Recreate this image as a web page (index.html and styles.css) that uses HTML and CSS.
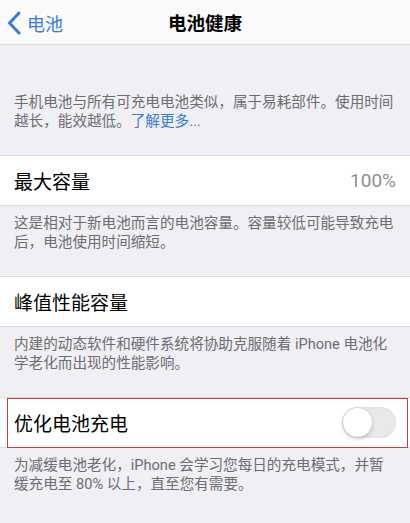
FILE: index.html
```html
<!DOCTYPE html>
<html lang="zh-CN">
  <head>
    <meta charset="UTF-8" />
    <meta name="viewport" content="width=device-width, initial-scale=1.0" />
    <title>电池健康</title>
    <link rel="stylesheet" href="styles.css">
  </head>
  <body>
    <header class="navbar">
      <a class="back" href="#">
        <svg class="chevron" width="14" height="24" viewBox="0 0 14 24">
          <polyline points="12,2 2.5,12 12,22" fill="none" stroke="#3a7bd5" stroke-width="3" stroke-linecap="round" stroke-linejoin="round" />
        </svg>
        <span>电池</span>
      </a>
      <h1 class="title">电池健康</h1>
    </header>

    <main class="settings">
      <p class="intro">
        手机电池与所有可充电电池类似，属于易耗部件。使用时间越长，能效越低。<a class="link" href="#">了解更多...</a>
      </p>

      <div class="row">
        <span class="label">最大容量</span>
        <span class="value">100%</span>
      </div>
      <p class="footnote">这是相对于新电池而言的电池容量。容量较低可能导致充电后，电池使用时间缩短。</p>

      <div class="row">
        <span class="label">峰值性能容量</span>
      </div>
      <p class="footnote">内建的动态软件和硬件系统将协助克服随着 iPhone 电池化学老化而出现的性能影响。</p>

      <div class="row highlighted">
        <span class="label">优化电池充电</span>
        <span class="toggle"><span class="knob"></span></span>
        <span class="mark"></span>
      </div>
      <p class="footnote">为减缓电池老化，iPhone 会学习您每日的充电模式，并暂缓充电至 80% 以上，直至您有需要。</p>
    </main>
  </body>
</html>
```

FILE: styles.css
```css
html {
  font-family: "Roboto", "Noto Sans CJK SC", sans-serif;
}

body {
  margin: 0;
  padding: 0;
  width: 410px;
  height: 523px;
  overflow: hidden;
  background: #efeff4;
}

.navbar {
  position: relative;
  display: flex;
  align-items: center;
  justify-content: center;
  height: 44px;
  background: #fafafa;
  border-bottom: 1px solid #dcdcde;
}

.back {
  position: absolute;
  left: 7px;
  top: 10px;
  display: flex;
  align-items: center;
  gap: 6px;
  color: #3a7bd5;
  text-decoration: none;
  font-size: 18px;
}

.chevron {
  display: block;
}

.title {
  margin: 0;
  font-size: 18.5px;
  font-weight: 600;
  color: #000;
}

.settings {
  display: flex;
  flex-direction: column;
}

.intro,
.footnote {
  margin: 0;
  padding: 8px 14px 24px;
  font-size: 14.6px;
  line-height: 19px;
  color: #6d6d72;
}

.intro {
  padding-top: 48px;
}

.link {
  color: #3a7bd5;
  text-decoration: none;
}

.row {
  position: relative;
  display: flex;
  align-items: center;
  justify-content: space-between;
  height: 49px;
  padding: 0 14px;
  background: #fff;
  border-top: 1px solid #dcdcde;
  border-bottom: 1px solid #dcdcde;
}

.label {
  font-size: 19px;
  color: #000;
}

.value {
  font-size: 19px;
  color: #8e8e93;
}

.toggle {
  position: relative;
  width: 54px;
  height: 31px;
  border-radius: 16px;
  background: #e9e9eb;
  box-shadow: inset 0 0 0 1.5px #e3e3e5;
}

.knob {
  position: absolute;
  left: 1px;
  top: 1px;
  width: 29px;
  height: 29px;
  border-radius: 50%;
  background: #fff;
  box-shadow: 0 2px 4px rgba(0, 0, 0, 0.18), 0 0 0 0.5px rgba(0, 0, 0, 0.08);
}

/* red annotation box drawn over the row */
.mark {
  position: absolute;
  left: 7px;
  right: 2px;
  top: 0;
  bottom: -1px;
  border: 1px solid #d0393f;
  pointer-events: none;
}
```
